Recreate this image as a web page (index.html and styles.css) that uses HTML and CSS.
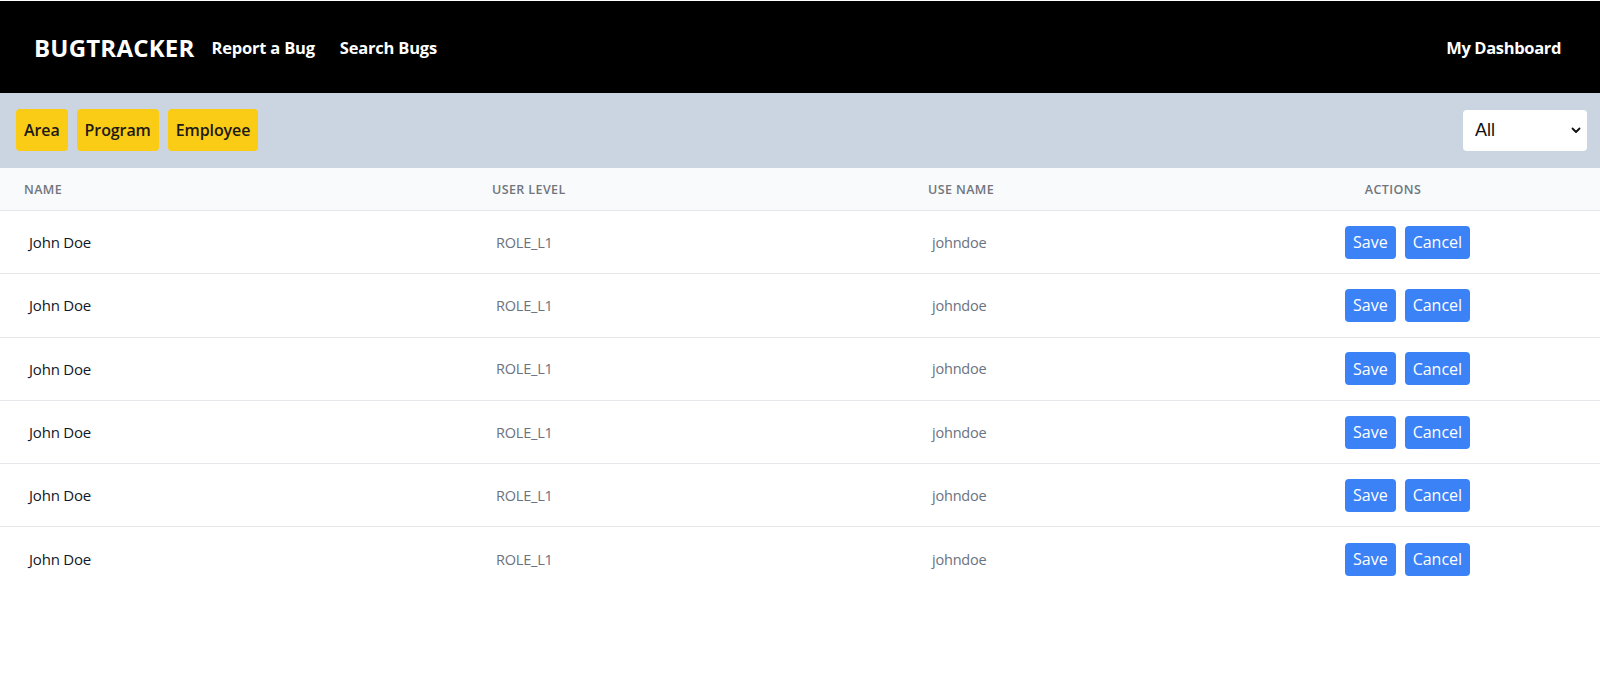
FILE: index.html
```html
<!DOCTYPE html>
<html lang="en">
<head>
<meta charset="utf-8">
<title>BugTracker</title>
<link rel="stylesheet" href="styles.css">
</head>
<body>
<nav class="navbar">
  <div class="nav-left">
    <span class="brand">BUGTRACKER</span>
    <a class="nav-link" href="#">Report a Bug</a>
    <a class="nav-link" href="#">Search Bugs</a>
  </div>
  <a class="nav-link" href="#">My Dashboard</a>
</nav>
<div class="toolbar">
  <div class="tabs">
    <button class="tab">Area</button>
    <button class="tab">Program</button>
    <button class="tab">Employee</button>
  </div>
  <div class="select-wrap">
    <select class="select">
      <option>All</option>
    </select>
    <svg class="chevron" width="10" height="7" viewBox="0 0 10 7"><path d="M1.5 1.5 L5 5 L8.5 1.5" fill="none" stroke="#111" stroke-width="1.8" stroke-linecap="round" stroke-linejoin="round"/></svg>
  </div>
</div>
<div class="table">
  <div class="row head">
    <div class="th">Name</div>
    <div class="th">User Level</div>
    <div class="th">Use Name</div>
    <div class="th center">Actions</div>
  </div>
  <div class="row">
    <div class="td name">John Doe</div><div class="td muted">ROLE_L1</div><div class="td muted">johndoe</div>
    <div class="td actions"><button class="btn">Save</button><button class="btn">Cancel</button></div>
  </div>
  <div class="row">
    <div class="td name">John Doe</div><div class="td muted">ROLE_L1</div><div class="td muted">johndoe</div>
    <div class="td actions"><button class="btn">Save</button><button class="btn">Cancel</button></div>
  </div>
  <div class="row">
    <div class="td name">John Doe</div><div class="td muted">ROLE_L1</div><div class="td muted">johndoe</div>
    <div class="td actions"><button class="btn">Save</button><button class="btn">Cancel</button></div>
  </div>
  <div class="row">
    <div class="td name">John Doe</div><div class="td muted">ROLE_L1</div><div class="td muted">johndoe</div>
    <div class="td actions"><button class="btn">Save</button><button class="btn">Cancel</button></div>
  </div>
  <div class="row">
    <div class="td name">John Doe</div><div class="td muted">ROLE_L1</div><div class="td muted">johndoe</div>
    <div class="td actions"><button class="btn">Save</button><button class="btn">Cancel</button></div>
  </div>
  <div class="row last">
    <div class="td name">John Doe</div><div class="td muted">ROLE_L1</div><div class="td muted">johndoe</div>
    <div class="td actions"><button class="btn">Save</button><button class="btn">Cancel</button></div>
  </div>
</div>
</body>
</html>
```
FILE: styles.css
```css
* { box-sizing: border-box; }
html, body { margin: 0; padding: 0; background: #fff; }
body {
  font-family: "Open Sans", "Noto Sans", "Liberation Sans", sans-serif;
  padding-top: 1px;
}
.navbar {
  height: 92px;
  background: #000;
  display: flex;
  align-items: center;
  justify-content: space-between;
  padding: 0 39px 0 34px;
}
.nav-left { display: flex; align-items: center; }
.brand {
  color: #fff;
  font-weight: 700;
  font-size: 24px;
  letter-spacing: 0.2px;
  margin-right: 17px;
}
.nav-link {
  color: #fff;
  text-decoration: none;
  font-weight: 700;
  font-size: 16.5px;
  letter-spacing: -0.2px;
  margin-right: 25px;
}
.navbar > .nav-link { margin-right: 0; letter-spacing: -0.35px; }
.toolbar {
  height: 75px;
  background: #cbd5e1;
  display: flex;
  align-items: center;
  justify-content: space-between;
  padding: 0 13px 1px 16px;
}
.tabs { display: flex; gap: 9px; }
.tab {
  height: 42px;
  padding: 0 8px;
  border: none;
  border-radius: 4px;
  background: #facc15;
  color: #1c1917;
  font-family: inherit;
  font-size: 16px;
  font-weight: 600;
  letter-spacing: -0.1px;
}
.select-wrap { position: relative; }
.select {
  appearance: none;
  -webkit-appearance: none;
  width: 124px;
  height: 41px;
  border: none;
  border-radius: 4px;
  background: #fff;
  padding: 0 12px;
  font-family: "Liberation Sans", Arial, sans-serif;
  font-size: 18px;
  color: #111;
}
.chevron {
  position: absolute;
  right: 6px;
  top: 17px;
  pointer-events: none;
}
.row {
  display: grid;
  grid-template-columns: 468px 436px 282px 1fr;
  align-items: center;
  height: 63.3px;
  border-bottom: 1px solid #e5e7eb;
}
.row.last { border-bottom: none; }
.row.head {
  height: 43px;
  background: #f8fafc;
  border-bottom: 1px solid #e2e8f0;
}
.th {
  padding-left: 24px;
  font-size: 12.5px;
  font-weight: 600;
  text-transform: uppercase;
  letter-spacing: 0.4px;
  color: #71757d;
}
.th.center { padding-left: 0; text-align: center; }
.td {
  padding-left: 28px;
  font-size: 14.5px;
  letter-spacing: -0.2px;
}
.td.name { color: #111827; font-size: 15px; padding-left: 29px; }
.td.muted { color: #6b7280; }
.td.actions {
  padding-left: 159px;
  display: flex;
  gap: 9px;
}
.btn {
  height: 33px;
  padding: 0 8px;
  border: none;
  border-radius: 4px;
  background: #3b82f6;
  color: #fff;
  font-family: inherit;
  font-size: 16px;
  letter-spacing: 0;
}
```
